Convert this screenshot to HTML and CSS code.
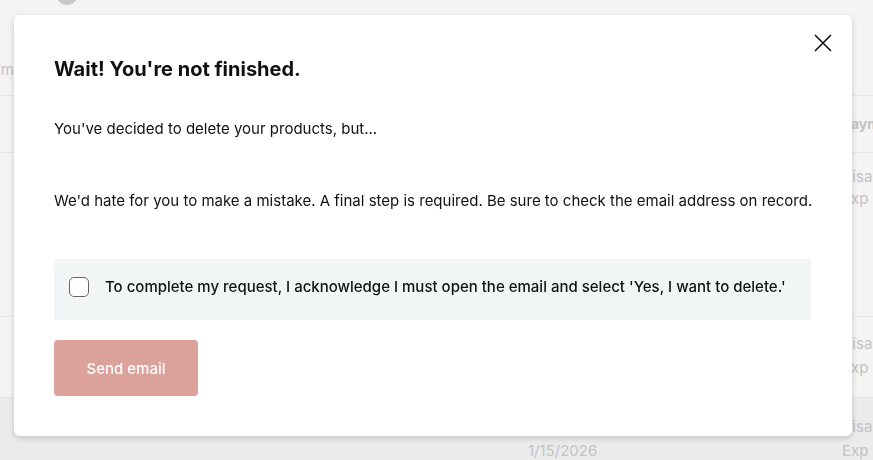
FILE: index.html
```html
<!DOCTYPE html>
<html lang="en">
<head>
<meta charset="utf-8">
<title>Delete products</title>
<link rel="stylesheet" href="styles.css">
</head>
<body>
<div class="page">
  <div class="row row-top">
    <div class="avatar"></div>
    <div class="cell-left"><span>Term</span></div>
  </div>
  <div class="row row-head">
    <div class="cell-left"></div>
    <div class="cell-date"></div>
    <div class="cell-pay"><span class="head">Payment</span></div>
  </div>
  <div class="row row-a">
    <div class="cell-left"></div>
    <div class="cell-date"></div>
    <div class="cell-pay"><span>Visa</span><span>Exp</span></div>
  </div>
  <div class="row row-b">
    <div class="cell-left"></div>
    <div class="cell-date"></div>
    <div class="cell-pay"><span>Visa</span><span>Exp</span></div>
  </div>
  <div class="row row-c">
    <div class="cell-left"></div>
    <div class="cell-date"><span class="spacer">&nbsp;</span><span>1/15/2026</span></div>
    <div class="cell-pay"><span>Visa</span><span>Exp</span></div>
  </div>
</div>

<div class="modal" role="dialog" aria-labelledby="mtitle">
  <button class="close" aria-label="Close">
    <svg width="18" height="18" viewBox="0 0 18 18"><path d="M1 1 L17 17 M17 1 L1 17" stroke="#111" stroke-width="1.6" fill="none"/></svg>
  </button>
  <h2 id="mtitle" class="title">Wait! You're not finished.</h2>
  <p class="text first">You've decided to delete your products, but...</p>
  <p class="text second">We'd hate for you to make a mistake. A final step is required. Be sure to check the email address on record.</p>
  <label class="ack">
    <span class="box"></span>
    <span class="ack-text">To complete my request, I acknowledge I must open the email and select 'Yes, I want to delete.'</span>
  </label>
  <button class="send">Send email</button>
</div>
</body>
</html>
```

FILE: styles.css
```css
* { box-sizing: border-box; }
html, body { margin: 0; padding: 0; }
body {
  width: 873px;
  height: 460px;
  overflow: hidden;
  background: #f4f4f4;
  font-family: Inter, "Liberation Sans", sans-serif;
  color: #111;
}
.page { width: 873px; }
.row {
  display: flex;
  border-bottom: 1px solid #e6e6e6;
  color: #c3c3c3;
  font-size: 15px;
}
.row > div { flex: none; }
.row-top { height: 96px; position: relative; align-items: flex-start; }
.avatar {
  position: absolute;
  left: 56px; top: -17px;
  width: 22px; height: 22px;
  border-radius: 50%;
  background: #c9c9c9;
}
.cell-left {
  width: 14px;
  display: flex;
  justify-content: flex-end;
  white-space: nowrap;
}
.row-top .cell-left { padding-top: 60px; }
.cell-date {
  width: 828px;
  padding-left: 514px;
  display: flex;
  flex-direction: column;
  white-space: nowrap;
  line-height: 25px;
}
.cell-pay {
  display: flex;
  flex-direction: column;
  white-space: nowrap;
  line-height: 24px;
}
.head { font-weight: 700; font-size: 14px; }
.row-head { height: 57px; align-items: center; }
.row-a { height: 164px; padding-top: 13px; }
.row-a .cell-pay { line-height: 22px; }
.row-b { height: 81px; padding-top: 15px; }
.row-c { height: 70px; padding-top: 17px; background: #ebebeb; border-bottom: 0; }
.row-c .cell-date { margin-top: -2px; }

.modal {
  position: fixed;
  left: 14px; top: 15px;
  width: 838px; height: 421px;
  background: #fff;
  border-radius: 6px;
  box-shadow: 0 2px 6px rgba(0,0,0,0.18);
  padding: 40px 40px 0 40px;
}
.close {
  position: absolute;
  right: 19px; top: 18px;
  width: 20px; height: 20px;
  padding: 1px;
  border: 0; background: none;
  display: flex; align-items: center; justify-content: center;
}
.title {
  margin: 0;
  font-size: 20px;
  font-weight: 700;
  line-height: 28px;
  color: #111;
}
.text {
  margin: 0;
  font-size: 15px;
  line-height: 20px;
  color: #111;
  white-space: nowrap;
}
.first { margin-top: 36px; }
.second { margin-top: 52px; }
.ack {
  margin-top: 48px;
  height: 61px;
  width: 757px;
  background: #f1f5f6;
  display: flex;
  align-items: center;
  padding: 0 0 6px 15px;
  gap: 16px;
}
.box {
  width: 20px; height: 20px;
  border: 1px solid #666;
  border-radius: 5px;
  background: #fff;
  flex: none;
}
.ack-text { font-size: 15px; font-weight: 500; color: #111; white-space: nowrap; }
.send {
  margin-top: 20px;
  width: 144px; height: 56px;
  background: #dba29b;
  color: #fff;
  border: 0;
  border-radius: 4px;
  font-family: inherit;
  font-size: 15px;
  font-weight: 500;
}
```
